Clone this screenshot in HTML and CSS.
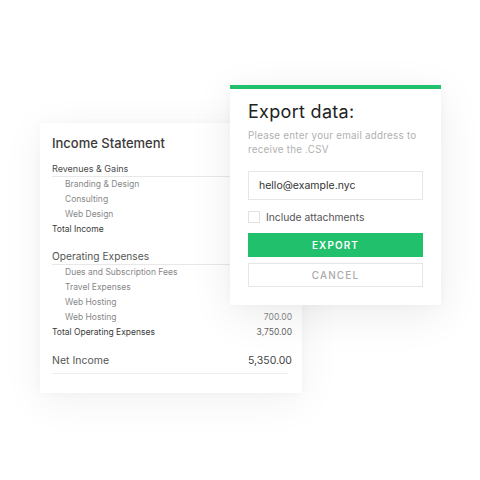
FILE: index.html
```html
<!DOCTYPE html>
<html>
<head>
<meta charset="utf-8">
<link rel="stylesheet" href="styles.css">
</head>
<body>
<div class="stage">
  <section class="statement">
    <h1 class="st-title">Income Statement</h1>
    <div class="row head">Revenues &amp; Gains</div>
    <div class="row sub"><span>Branding &amp; Design</span></div>
    <div class="row sub"><span>Consulting</span></div>
    <div class="row sub"><span>Web Design</span></div>
    <div class="row total"><span>Total Income</span></div>
    <div class="row head big">Operating Expenses</div>
    <div class="row sub"><span>Dues and Subscription Fees</span></div>
    <div class="row sub"><span>Travel Expenses</span></div>
    <div class="row sub"><span>Web Hosting</span></div>
    <div class="row sub"><span>Web Hosting</span><span class="amt">700.00</span></div>
    <div class="row total"><span>Total Operating Expenses</span><span class="amt">3,750.00</span></div>
    <div class="row net"><span>Net Income</span><span class="amt">5,350.00</span></div>
    <div class="net-line"></div>
  </section>

  <section class="modal">
    <h2 class="m-title">Export data:</h2>
    <p class="m-desc">Please enter your email address to receive the .CSV</p>
    <div class="m-input">hello@example.nyc</div>
    <label class="m-check"><span class="box"></span>Include attachments</label>
    <div class="btn primary">EXPORT</div>
    <div class="btn ghost">CANCEL</div>
  </section>
</div>
</body>
</html>
```
FILE: styles.css
```css
* { box-sizing: border-box; }
html, body { margin: 0; padding: 0; background: #fff; }
body { font-family: "Inter", "Liberation Sans", sans-serif; color: #333; }
.stage { position: relative; width: 480px; height: 480px; padding: 123px 0 0 40px; }

.statement {
  width: 262px;
  height: 270px;
  background: #fff;
  padding: 11px 10px 0 12px;
  box-shadow: 0 8px 40px rgba(0,0,0,0.06), 0 0 8px rgba(0,0,0,0.03);
}
.st-title { margin: 0; font-size: 13px; line-height: 18px; font-weight: 500; color: #3a3a3a; }
.row { display: flex; justify-content: space-between; height: 15px; line-height: 15px; font-size: 8.5px; color: #666; }
.row.head { margin-top: 9px; font-size: 9px; color: #4a4a4a; border-bottom: 1px solid #e8e8e8; height: 16px; margin-right: 4px; }
.row.head.big { margin-top: 12px; font-size: 10.2px; color: #555; height: 16px; line-height: 14px; }
.row.sub { padding-left: 13px; color: #888; }
.row.total { color: #3a3a3a; font-weight: 400; }
.amt { color: #888; }
.row.total .amt { color: #666; font-weight: 400; }
.row.net { margin-top: 12px; height: 18px; line-height: 18px; font-size: 10.5px; color: #555; }
.row.net .amt { color: #444; font-size: 10.5px; }
.net-line { margin-top: 3px; margin-right: 4px; border-bottom: 1px solid #ececec; }

.modal {
  position: absolute;
  left: 230px;
  top: 85px;
  width: 211px;
  background: #fff;
  border-top: 4px solid #20c06c;
  padding: 11px 18px 18px;
  box-shadow: 0 10px 40px rgba(0,0,0,0.08), 0 0 8px rgba(0,0,0,0.03);
}
.m-title { margin: 0; font-size: 18px; line-height: 24px; font-weight: 400; color: #222; letter-spacing: 0.3px; }
.m-desc { margin: 5px 0 0; font-size: 9.8px; line-height: 14px; color: #b0b0b0; letter-spacing: 0.25px; }
.m-input { margin-top: 14px; height: 29px; border: 1px solid #e6e6e6; padding: 0 10px; line-height: 27px; font-size: 10.5px; color: #333; }
.m-check { margin-top: 11px; display: flex; align-items: center; height: 12px; font-size: 10.3px; color: #555; }
.box { width: 12px; height: 12px; border: 1px solid #e2e2e2; margin-right: 6px; background: #fff; }
.btn { height: 24px; line-height: 24px; text-align: center; font-size: 10px; font-weight: 600; letter-spacing: 1.1px; }
.btn.primary { margin-top: 10px; background: #20c06c; color: #fff; }
.btn.ghost { margin-top: 6px; border: 1px solid #e6e6e6; line-height: 22px; color: #aaa; font-weight: 500; }
```
